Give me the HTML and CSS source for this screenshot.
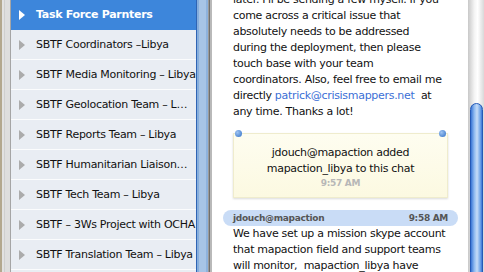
FILE: index.html
```html
<!DOCTYPE html>
<html lang="en">
<head>
    <meta charset="UTF-8">
    <title>Skype chat</title>
    <link rel="stylesheet" href="styles.css">
</head>
<body>
    <main class="window">

        <div class="edge"></div>

        <ul class="groups">
            <li class="group selected"><span class="arrow"></span>Task Force Parnters</li>
            <li class="group"><span class="arrow"></span>SBTF Coordinators –Libya</li>
            <li class="group"><span class="arrow"></span>SBTF Media Monitoring – Libya</li>
            <li class="group"><span class="arrow"></span>SBTF Geolocation Team – L…</li>
            <li class="group"><span class="arrow"></span>SBTF Reports Team – Libya</li>
            <li class="group"><span class="arrow"></span>SBTF Humanitarian Liaison…</li>
            <li class="group"><span class="arrow"></span>SBTF Tech Team – Libya</li>
            <li class="group"><span class="arrow"></span>SBTF – 3Ws Project with OCHA</li>
            <li class="group"><span class="arrow"></span>SBTF Translation Team – Libya</li>
            <li class="group"></li>
        </ul>

        <div class="divider"></div>

        <section class="chat">
            <div class="chat-inner">
                <p class="text">later. I'll be sending a few myself. If you<br>come across a critical issue that<br>absolutely needs to be addressed<br>during the deployment, then please<br>touch base with your team<br>coordinators. Also, feel free to email me<br>directly <a class="link">patrick@crisismappers.net</a>&nbsp; at<br>any time. Thanks a lot!</p>

                <div class="notice">
                    <span class="pin left"></span>
                    <span class="pin right"></span>
                    <p>jdouch@mapaction added<br>mapaction_libya to this chat</p>
                    <p class="notice-time">9:57 AM</p>
                </div>

                <div class="msg-head">
                    <span>jdouch@mapaction</span>
                    <span>9:58 AM</span>
                </div>
                <p class="text">We have set up a mission skype account<br>that mapaction field and support teams<br>will monitor,&nbsp; mapaction_libya have</p>
            </div>
        </section>

        <div class="scrollbar">
            <div class="thumb"></div>
        </div>

    </main>
</body>
</html>
```

FILE: styles.css
```css
*{ padding:0; margin: 0; box-sizing: border-box;}

:root{
    --select: #3d86db;
    --row: #e9edf3;
    --ink: #111;
    --link: #3b6fd6;
    --note: #fcf9e1;
    --pill: #c9dcf6;
}

body{
    width: 484px;
    height: 272px;
    overflow: hidden;
    font-family: "DejaVu Sans", sans-serif;
    letter-spacing: -0.3px;
    background: #fff;
}

.window{
    display: flex;
    height: 272px;
    overflow: hidden;
}

/*   LEFT STRIP   */

.edge{
    width: 11px;
    flex: none;
    background: linear-gradient(90deg, #b3a88f 0 2px, #e2e2e2 2px 4px, #cfcfcf 4px 5px, #dedede 5px 10px, #a5a5a5 10px);
}

/*   GROUP LIST   */

.groups{
    list-style: none;
    width: 185px;
    flex: none;
    background: var(--row);
}
.group{
    display: flex;
    align-items: center;
    height: 30px;
    border-bottom: 1px solid #fbfcfd;
    font-size: 11px;
    color: var(--ink);
    white-space: nowrap;
    overflow: hidden;
}
.arrow{
    flex: none;
    width: 0;
    height: 0;
    margin: 0 11px 0 8px;
    border-top: 5px solid transparent;
    border-bottom: 5px solid transparent;
    border-left: 6px solid #ababab;
}
.selected{
    background: var(--select);
    color: #fff;
    font-weight: bold;
    border-bottom-color: var(--select);
}
.selected .arrow{ border-left-color: #fff; }

/*   DIVIDER   */

.divider{
    width: 16px;
    flex: none;
    background: linear-gradient(90deg, #2f64b4 0 1px, #86aedc 1px 3px, #a7c4e6 3px 10px, #8eb2dd 10px 12px, #9a9a9a 12px 13px, #6f6f6f 13px 14px, #b9b9b9 14px);
}

/*   CHAT   */

.chat{
    flex: 1;
    overflow: hidden;
}
.chat-inner{
    margin-top: -8px;
    padding: 0 20px 0 21px;
}
.text{
    font-size: 11px;
    line-height: 16px;
    color: var(--ink);
    white-space: nowrap;
}
.link{ color: var(--link); }

.notice{
    position: relative;
    margin: 13px 0 12px;
    height: 65px;
    padding-top: 11px;
    background: linear-gradient(#fefdf0, var(--note));
    border: 1px solid #efeccd;
    box-shadow: 0 1px 2px rgba(0,0,0,.15);
    text-align: center;
    font-size: 11px;
    line-height: 16px;
    color: var(--ink);
}
.notice-time{
    font-size: 9px;
    line-height: 12px;
    font-weight: bold;
    color: #b7b7b7;
}
.pin{
    position: absolute;
    top: -4px;
    width: 7px;
    height: 7px;
    border-radius: 50%;
    background: radial-gradient(circle at 35% 35%, #9fc4f2, #2f6fc6);
}
.pin.left{ left: 1px; }
.pin.right{ right: 1px; }

.msg-head{
    display: flex;
    justify-content: space-between;
    margin: 0 -10px;
    padding: 0 10px;
    height: 16px;
    border-radius: 8px;
    background: var(--pill);
    font-size: 9px;
    line-height: 16px;
    font-weight: bold;
    color: #555;
}

/*   SCROLLBAR   */

.scrollbar{
    width: 16px;
    flex: none;
    padding: 103px 1px 0 2px;
    background: linear-gradient(90deg, #c8c8c8, #f4f4f4 40%, #fff 60%, #d9d9d9);
}
.thumb{
    height: 200px;
    border-radius: 7px 7px 0 0;
    border: 1px solid #2459b7;
    background: linear-gradient(90deg, #3a76d6, #8fbaf0 30%, #c6dcf7 55%, #6ea3e8 85%, #3a76d6);
}
```
